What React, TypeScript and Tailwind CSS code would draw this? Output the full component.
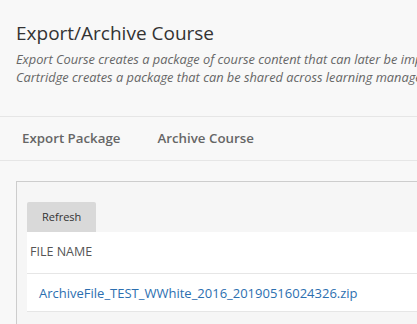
import React from "react"

const files = ["ArchiveFile_TEST_WWhite_2016_20190516024326.zip"]

export default function App() {
  return (
    <div className="min-h-screen w-full overflow-hidden bg-[#f8f8f8] font-['Open_Sans',sans-serif] text-[#333]">
      <div className="px-4 pt-[19px]">
        <h1 className="text-[19px] leading-[28px] font-normal text-[#333] whitespace-nowrap">Export/Archive Course</h1>
        <p className="mt-[3px] text-[12.8px] leading-[18px] italic text-[#666] whitespace-nowrap">
          <span className="block">Export Course creates a package of course content that can later be imported into another course. Export Common</span>
          <span className="block">Cartridge creates a package that can be shared across learning management systems.</span>
        </p>
      </div>

      <div className="mt-[30px] flex h-[45px] items-center gap-[37px] border-y border-[#e6e6e6] pl-[22px]">
        <span className="text-[13.3px] font-semibold text-[#666]">Export Package</span>
        <span className="text-[13.3px] font-semibold text-[#666]">Archive Course</span>
      </div>

      <div className="ml-4 mt-5 -mr-8 border border-[#cdcdcd] bg-[#f6f6f6] pl-[10px] pt-5 pb-6">
        <button className="h-[30px] rounded-t-[2px] bg-[#d9d9d9] px-[15px] text-[11px] text-[#333]">
          Refresh
        </button>
        <div className="bg-white">
          <div className="flex h-[42px] items-center border-b border-[#e6e6e6] pl-[3px] text-[12.5px] uppercase text-[#555]">
            File Name
          </div>
          {files.map((f) => (
            <div key={f} className="flex h-[38px] items-center border-b border-[#e6e6e6] pl-3 pt-[2px]">
              <a className="text-[13px] text-[#2c6fb0] whitespace-nowrap">{f}</a>
            </div>
          ))}
        </div>
      </div>
    </div>
  )
}
